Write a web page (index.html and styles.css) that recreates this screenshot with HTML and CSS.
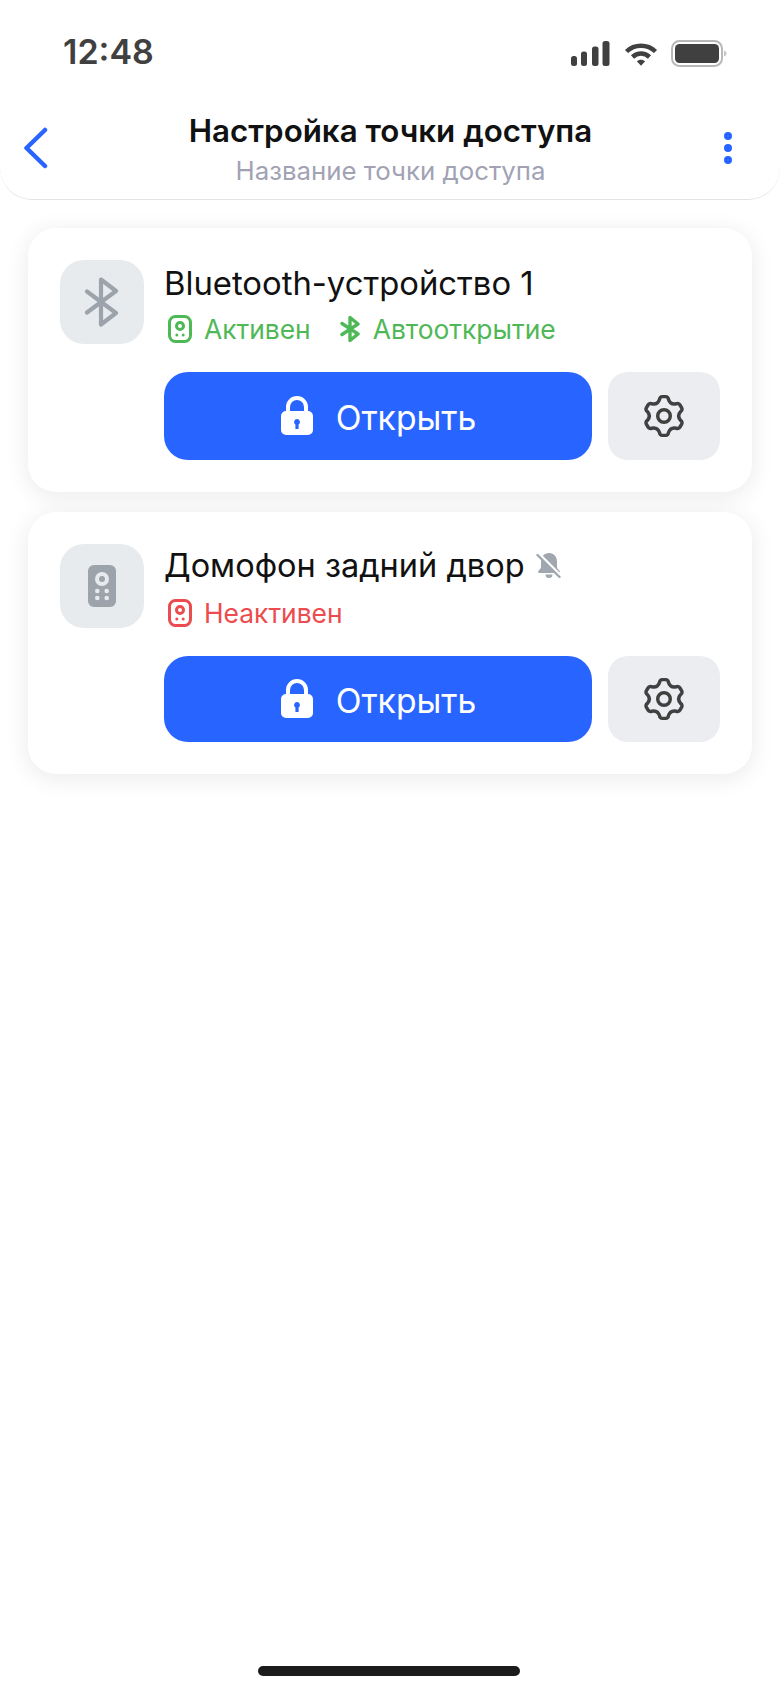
FILE: index.html
```html
<!DOCTYPE html>
<html lang="ru">
<head>
<meta charset="utf-8">
<title>Настройка точки доступа</title>
<link rel="stylesheet" href="styles.css">
</head>
<body>
<div class="screen">
  <header class="top">
    <div class="status">
      <span class="time">12:48</span>
      <div class="status-icons">
        <svg class="sig" width="40" height="26" viewBox="0 0 40 26"><rect x="1" y="15" width="6" height="10" rx="2.5"/><rect x="11" y="10.5" width="6" height="14.5" rx="2.5"/><rect x="22" y="5.5" width="6.5" height="19.5" rx="2.5"/><rect x="32.5" y="0" width="7" height="25" rx="2.5"/></svg>
        <svg class="wifi" width="34" height="26" viewBox="0 0 34 26"><path d="M2.5 10.5C10.5 2.8 23.5 2.8 31.5 10.5"/><path d="M8.5 16C13.5 11.3 20.5 11.3 25.5 16"/><path class="wifi-dot" d="M12.8 20.3C15.3 18.1 18.7 18.1 21.2 20.3L17 24.8Z"/></svg>
        <svg class="batt" width="56" height="28" viewBox="0 0 56 28"><rect x="1" y="1" width="50" height="25" rx="7.5" class="batt-shell"/><rect x="4" y="4" width="44" height="19" rx="4.5" class="batt-fill"/><path d="M53 10.5c1.5.5 2.500 1.700 2.500 3s-1 2.500-2.500 3z" class="batt-tip"/></svg>
      </div>
    </div>
    <div class="nav">
      <svg class="back" width="28" height="42" viewBox="0 0 28 42"><path d="M23 3 4.500 21 23 39"/></svg>
      <div class="nav-titles">
        <div class="nav-title">Настройка точки доступа</div>
        <div class="nav-sub">Название точки доступа</div>
      </div>
      <div class="dots"><i></i><i></i><i></i></div>
    </div>
  </header>

  <main class="list">
    <section class="card card-a">
      <div class="info">
        <div class="thumb">
          <svg width="36" height="50" viewBox="0 0 36 50" class="bt-large"><path d="M3 14.500 32 36 17 47.500V2.500L32 14 3 35.500"/></svg>
        </div>
        <div class="texts">
          <div class="name">Bluetooth-устройство 1</div>
          <div class="tags">
            <span class="tag tag-ok">
              <svg width="24" height="28" viewBox="0 0 24 28" class="remote-ico"><rect x="1.500" y="1.500" width="21" height="25" rx="6"/><circle cx="12" cy="11" r="3.500"/><circle class="fill" cx="8.800" cy="20" r="1.500"/><circle class="fill" cx="15.200" cy="20" r="1.500"/></svg>
              Активен
            </span>
            <span class="tag tag-ok">
              <svg width="20" height="28" viewBox="0 0 20 28" class="bt-small"><path d="M2 8.500 18 19 10 25.500V2.500L18 9 2 19.500"/></svg>
              Автооткрытие
            </span>
          </div>
        </div>
      </div>
      <div class="actions actions-a">
        <button class="open" type="button">
          <svg width="34" height="40" viewBox="0 0 34 40" class="lock"><path class="shackle" d="M8 17v-6a9 9 0 0 1 18 0v6"/><path class="body" fill-rule="evenodd" d="M6 15h22a5 5 0 0 1 5 5v14a5 5 0 0 1-5 5H6a5 5 0 0 1-5-5V20a5 5 0 0 1 5-5Zm11 8a3 3 0 0 0-1.600 5.500V33h3.200v-4.500A3 3 0 0 0 17 23Z"/></svg>
          <span class="open-label">Открыть</span>
        </button>
        <button class="gear" type="button" aria-label="Настройки">
          <svg width="44" height="44" viewBox="0 0 42 42" class="gear-ico"><path d="M16.8 5A2.5 2.5 0 0 1 19.3 2.5H22.7A2.500 2.500 0 0 1 25.2 5Q27 10.600 32.760 9.360A2.500 2.500 0 0 1 36.170 10.280L37.870 13.220A2.500 2.500 0 0 1 36.960 16.640Q33 21 36.960 25.360A2.500 2.500 0 0 1 37.870 28.780L36.170 31.720A2.500 2.500 0 0 1 32.760 32.640Q27 31.400 25.200 37A2.500 2.500 0 0 1 22.700 39.500H19.300A2.500 2.500 0 0 1 16.800 37Q15 31.400 9.240 32.640A2.500 2.500 0 0 1 5.830 31.720L4.130 28.780A2.500 2.500 0 0 1 5.040 25.360Q9 21 5.040 16.640A2.500 2.500 0 0 1 4.130 13.220L5.830 10.280A2.500 2.500 0 0 1 9.240 9.360Q15 10.600 16.800 5Z"/><circle cx="21" cy="21" r="6"/></svg>
        </button>
      </div>
    </section>

    <section class="card card-b">
      <div class="info">
        <div class="thumb">
          <svg width="28" height="42" viewBox="0 0 28 42"><rect class="remote-body" width="28" height="42" rx="6"/><circle class="remote-ring" cx="14" cy="14" r="7"/><circle class="remote-body" cx="14" cy="14" r="3"/><g class="remote-keys"><circle cx="9.300" cy="26" r="2.300"/><circle cx="18.700" cy="26" r="2.300"/><circle cx="9.300" cy="33" r="2.300"/><circle cx="18.700" cy="33" r="2.300"/></g></svg>
        </div>
        <div class="texts">
          <div class="name name-row">Домофон задний двор
            <svg width="26" height="26" viewBox="0 0 26 26" class="bell"><path class="bell-body" d="M13 1c5 0 8 3.700 8 8.500v5c0 1.700 1 3 2.500 4.300.8.800.3 2.200-.9 2.200H3.400c-1.200 0-1.700-1.400-.9-2.200C4 17.500 5 16.200 5 14.500v-5C5 4.700 8 1 13 1Z"/><path class="bell-body" d="M9.500 22.500h7a3.500 3.500 0 0 1-7 0Z"/><path class="bell-gap" d="M3 2 25 24"/><path class="bell-slash" d="M1.500 3 23.500 25"/></svg>
          </div>
          <div class="tags">
            <span class="tag tag-off">
              <svg width="24" height="28" viewBox="0 0 24 28" class="remote-ico"><rect x="1.500" y="1.500" width="21" height="25" rx="6"/><circle cx="12" cy="11" r="3.500"/><circle class="fill" cx="8.800" cy="20" r="1.500"/><circle class="fill" cx="15.200" cy="20" r="1.500"/></svg>
              Неактивен
            </span>
          </div>
        </div>
      </div>
      <div class="actions actions-b">
        <button class="open" type="button">
          <svg width="34" height="40" viewBox="0 0 34 40" class="lock"><path class="shackle" d="M8 17v-6a9 9 0 0 1 18 0v6"/><path class="body" fill-rule="evenodd" d="M6 15h22a5 5 0 0 1 5 5v14a5 5 0 0 1-5 5H6a5 5 0 0 1-5-5V20a5 5 0 0 1 5-5Zm11 8a3 3 0 0 0-1.600 5.500V33h3.200v-4.500A3 3 0 0 0 17 23Z"/></svg>
          <span class="open-label">Открыть</span>
        </button>
        <button class="gear" type="button" aria-label="Настройки">
          <svg width="44" height="44" viewBox="0 0 42 42" class="gear-ico"><path d="M16.8 5A2.5 2.5 0 0 1 19.3 2.5H22.7A2.500 2.500 0 0 1 25.2 5Q27 10.600 32.760 9.360A2.500 2.500 0 0 1 36.170 10.280L37.870 13.220A2.500 2.500 0 0 1 36.960 16.640Q33 21 36.960 25.360A2.500 2.500 0 0 1 37.870 28.780L36.170 31.720A2.500 2.500 0 0 1 32.760 32.640Q27 31.400 25.200 37A2.500 2.500 0 0 1 22.700 39.500H19.300A2.500 2.500 0 0 1 16.800 37Q15 31.400 9.240 32.640A2.500 2.500 0 0 1 5.830 31.720L4.130 28.780A2.500 2.500 0 0 1 5.040 25.360Q9 21 5.040 16.640A2.500 2.500 0 0 1 4.130 13.220L5.830 10.280A2.500 2.500 0 0 1 9.240 9.360Q15 10.600 16.800 5Z"/><circle cx="21" cy="21" r="6"/></svg>
        </button>
      </div>
    </section>
  </main>

  <div class="home-bar"></div>
</div>
</body>
</html>
```

FILE: styles.css
```css
* { box-sizing: border-box; }
html, body { margin: 0; padding: 0; background: #fff; }
body { font-family: Inter, "Liberation Sans", sans-serif; color: #111; }

.screen {
  position: relative;
  width: 780px;
  height: 1684px;
  overflow: hidden;
  background: #fff;
}

.top {
  height: 200px;
  background: #fff;
  border-bottom: 1px solid #e2e3e7;
  border-radius: 0 0 32px 32px;
}

.status {
  height: 102px;
  padding: 31px 53px 0 63px;
  display: flex;
  justify-content: space-between;
  align-items: flex-start;
}
.time {
  font-size: 34px;
  line-height: 41px;
  font-weight: 600;
  color: #404040;
}
.status-icons { display: flex; align-items: flex-start; gap: 14px; padding-top: 8px; }
.sig { fill: #404040; margin-top: 2px; }
.wifi { margin-top: 2px; }
.wifi path { fill: none; stroke: #404040; stroke-width: 4.5; stroke-linecap: butt; }
.wifi .wifi-dot { fill: #404040; stroke: none; }
.batt { margin-top: 1px; margin-left: -1px; }
.batt-shell { fill: none; stroke: #b8b8b8; stroke-width: 2; }
.batt-fill { fill: #404040; }
.batt-tip { fill: #c4c4c4; }

.nav {
  display: flex;
  align-items: flex-start;
  justify-content: space-between;
  padding: 0 48px 0 22px;
}
.back { margin-top: 25px; fill: none; stroke: #2864ff; stroke-width: 4.5; stroke-linecap: round; stroke-linejoin: round; }
.nav-titles { text-align: center; margin-left: 7px; }
.nav-title { font-size: 31.3px; line-height: 36px; font-weight: 600; color: #111; margin-top: 11px; }
.nav-sub { font-size: 25.8px; line-height: 30px; color: #a2a2b5; margin-top: 7px; }
.dots { display: flex; flex-direction: column; gap: 4px; margin-top: 30px; }
.dots i { display: block; width: 8px; height: 8px; border-radius: 50%; background: #2864ff; }

.list { padding: 28px 28px 0; display: flex; flex-direction: column; gap: 20px; }

.card {
  background: #fff;
  border-radius: 28px;
  padding: 32px 32px 0;
  box-shadow: 0 4px 24px rgba(20, 24, 40, 0.09);
}
.card-a { height: 264px; }
.card-b { height: 262px; }

.info { display: flex; align-items: flex-start; gap: 20px; }
.thumb {
  width: 84px;
  height: 84px;
  flex: none;
  border-radius: 24px;
  background: #e8ebee;
  display: flex;
  align-items: center;
  justify-content: center;
}
.bt-large { fill: none; stroke: #9ca3ab; stroke-width: 4.2; stroke-linecap: round; stroke-linejoin: round; }
.remote-body { fill: #9ca3ab; }
.remote-ring { fill: #e8ebee; }
.remote-keys { fill: #e8ebee; }

.texts { min-width: 0; }
.name { font-size: 32.8px; line-height: 40px; color: #111; margin-top: 3px; }
.name-row { display: flex; align-items: center; gap: 11px; font-size: 32.5px; margin-top: 2px; }
.bell { flex: none; margin-top: -3px; }
.bell-body { fill: #a0a7af; }
.bell-gap { fill: none; stroke: #fff; stroke-width: 3; }
.bell-slash { fill: none; stroke: #a0a7af; stroke-width: 2.4; stroke-linecap: round; }

.tags { display: flex; gap: 29px; margin: 11px 0 0 4px; }
.card-b .tags { margin-top: 12px; }
.tag { display: flex; align-items: center; gap: 12px; font-size: 26.4px; line-height: 30px; white-space: nowrap; }
.tag-ok { color: #4fb856; }
.tag-off { color: #ec4b4f; }
.remote-ico { fill: none; stroke: currentColor; stroke-width: 3; }
.remote-ico .fill { fill: currentColor; stroke: none; }
.bt-small { fill: none; stroke: currentColor; stroke-width: 3.4; stroke-linecap: round; stroke-linejoin: round; margin-right: 1px; }

.actions { display: flex; gap: 16px; margin-left: 104px; }
.actions-a { margin-top: 28px; height: 88px; }
.actions-b { margin-top: 28px; height: 86px; }

.open {
  flex: 0 0 428px;
  border: 0;
  border-radius: 24px;
  background: #2864ff;
  color: #fff;
  font: 400 33.7px/40px Inter, "Liberation Sans", sans-serif;
  display: flex;
  align-items: center;
  justify-content: center;
  gap: 22px;
  padding: 0;
}
.open-label { margin-top: 4px; }
.lock .shackle { fill: none; stroke: #fff; stroke-width: 4; }
.lock .body { fill: #fff; }

.gear {
  flex: 0 0 112px;
  border: 0;
  border-radius: 20px;
  background: #ecedf1;
  display: flex;
  align-items: center;
  justify-content: center;
  padding: 0;
}
.gear-ico { fill: none; stroke: #404040; stroke-width: 3.3; stroke-linejoin: round; }

.home-bar {
  position: absolute;
  left: 258px;
  bottom: 8px;
  width: 262px;
  height: 10px;
  border-radius: 5px;
  background: #1b1b1b;
}
```
